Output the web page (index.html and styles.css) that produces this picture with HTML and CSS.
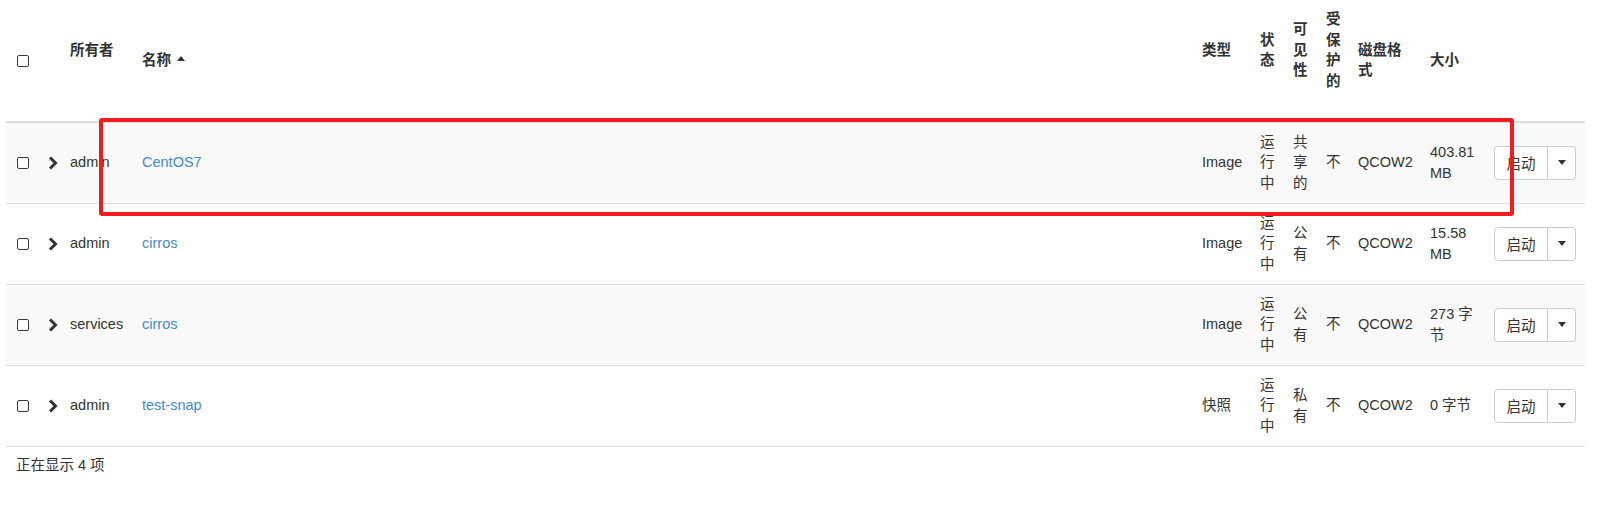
FILE: index.html
```html
<!DOCTYPE html>
<html lang="zh-CN">
<head>
<meta charset="utf-8">
<title>镜像</title>
<link rel="stylesheet" href="styles.css">
</head>
<body>
<div class="page">
  <table class="images">
    <colgroup>
      <col class="c-check"><col class="c-expand"><col class="c-owner"><col class="c-name">
      <col class="c-type"><col class="c-status"><col class="c-vis"><col class="c-prot">
      <col class="c-disk"><col class="c-size"><col class="c-act">
    </colgroup>
    <thead>
      <tr>
        <th><input type="checkbox" class="cb"></th>
        <th></th>
        <th class="th-up">所有者</th>
        <th>名称 <span class="caret-up"></span></th>
        <th class="th-up">类型</th>
        <th class="th-up">状态</th>
        <th class="th-up">可见性</th>
        <th class="th-up">受保护的</th>
        <th>磁盘格式</th>
        <th>大小</th>
        <th></th>
      </tr>
    </thead>
    <tbody>
      <tr class="odd">
        <td><input type="checkbox" class="cb"></td>
        <td><svg class="chev" viewBox="0 0 10 14" width="10" height="14"><path d="M2 1.5 L7.5 7 L2 12.5" fill="none" stroke="#333" stroke-width="3"/></svg></td>
        <td>admin</td>
        <td><a href="#" class="lnk">CentOS7</a></td>
        <td>Image</td>
        <td>运行中</td>
        <td>共享的</td>
        <td>不</td>
        <td>QCOW2</td>
        <td>403.81 MB</td>
        <td><div class="btn-group"><button class="btn btn-main">启动</button><button class="btn btn-caret"><span class="caret"></span></button></div></td>
      </tr>
      <tr>
        <td><input type="checkbox" class="cb"></td>
        <td><svg class="chev" viewBox="0 0 10 14" width="10" height="14"><path d="M2 1.5 L7.5 7 L2 12.5" fill="none" stroke="#333" stroke-width="3"/></svg></td>
        <td>admin</td>
        <td><a href="#" class="lnk">cirros</a></td>
        <td>Image</td>
        <td>运行中</td>
        <td>公有</td>
        <td>不</td>
        <td>QCOW2</td>
        <td>15.58 MB</td>
        <td><div class="btn-group"><button class="btn btn-main">启动</button><button class="btn btn-caret"><span class="caret"></span></button></div></td>
      </tr>
      <tr class="odd">
        <td><input type="checkbox" class="cb"></td>
        <td><svg class="chev" viewBox="0 0 10 14" width="10" height="14"><path d="M2 1.5 L7.5 7 L2 12.5" fill="none" stroke="#333" stroke-width="3"/></svg></td>
        <td>services</td>
        <td><a href="#" class="lnk">cirros</a></td>
        <td>Image</td>
        <td>运行中</td>
        <td>公有</td>
        <td>不</td>
        <td>QCOW2</td>
        <td>273 字节</td>
        <td><div class="btn-group"><button class="btn btn-main">启动</button><button class="btn btn-caret"><span class="caret"></span></button></div></td>
      </tr>
      <tr>
        <td><input type="checkbox" class="cb"></td>
        <td><svg class="chev" viewBox="0 0 10 14" width="10" height="14"><path d="M2 1.5 L7.5 7 L2 12.5" fill="none" stroke="#333" stroke-width="3"/></svg></td>
        <td>admin</td>
        <td><a href="#" class="lnk">test-snap</a></td>
        <td>快照</td>
        <td>运行中</td>
        <td>私有</td>
        <td>不</td>
        <td>QCOW2</td>
        <td>0 字节</td>
        <td><div class="btn-group"><button class="btn btn-main">启动</button><button class="btn btn-caret"><span class="caret"></span></button></div></td>
      </tr>
    </tbody>
    <tfoot>
      <tr><td colspan="11" class="foot">正在显示 4 项</td></tr>
    </tfoot>
  </table>
  <div class="highlight"></div>
</div>
</body>
</html>
```

FILE: styles.css
```css
html, body {
  margin: 0;
  padding: 0;
  background: #fff;
}
body {
  font-family: "Liberation Sans", "Noto Sans CJK SC", sans-serif;
  font-size: 14.5px;
  line-height: 20.5px;
  color: #333;
}
.page {
  position: relative;
  padding-left: 6px;
}
.images {
  width: 1579px;
  table-layout: fixed;
  border-collapse: collapse;
  border-spacing: 0;
}
.c-check { width: 34px; }
.c-expand { width: 22px; }
.c-owner { width: 72px; }
.c-name { width: 1060px; }
.c-type { width: 58px; }
.c-status { width: 33px; }
.c-vis { width: 33px; }
.c-prot { width: 32px; }
.c-disk { width: 72px; }
.c-size { width: 64px; }
.c-act { width: 99px; }

.images th {
  text-align: left;
  font-weight: bold;
  vertical-align: middle;
  padding: 9px 8px;
  border-bottom: 2px solid #ddd;
  word-break: break-word;
}
.images th.th-up {
  padding-bottom: 29.5px;
}
.images td {
  padding: 9.25px 8px;
  vertical-align: middle;
  border-top: 1px solid #ddd;
}
.images tbody tr.odd td {
  background: #f9f9f9;
}
.images td.foot {
  padding: 8px 8px 8px 10px;
  border-top: 1px solid #ddd;
}
.cb {
  -webkit-appearance: none;
  appearance: none;
  box-sizing: border-box;
  margin: 0 0 0 3px;
  width: 12px;
  height: 12px;
  border: 1px solid #3a3a3a;
  border-radius: 2px;
  background: #fff;
  vertical-align: middle;
}
.chev {
  display: block;
}
.caret-up {
  display: inline-block;
  width: 0;
  height: 0;
  border-left: 4.5px solid transparent;
  border-right: 4.5px solid transparent;
  border-bottom: 5px solid #333;
  vertical-align: 4px;
  margin-left: 2px;
}
.lnk {
  color: #428bca;
  text-decoration: none;
}
.btn-group {
  display: inline-flex;
}
.btn {
  font-family: inherit;
  font-size: 14.5px;
  color: #333;
  background: #fff;
  border: 1px solid #ccc;
  height: 34px;
  padding: 0;
  margin: 0;
  display: flex;
  align-items: center;
  justify-content: center;
}
.btn-main {
  width: 54px;
  border-radius: 4px 0 0 4px;
}
.btn-caret {
  width: 28px;
  border-left: 0;
  border-radius: 0 4px 4px 0;
}
.caret {
  display: inline-block;
  width: 0;
  height: 0;
  border-left: 4.5px solid transparent;
  border-right: 4.5px solid transparent;
  border-top: 5px solid #333;
}
.highlight {
  position: absolute;
  left: 99px;
  top: 118px;
  width: 1407px;
  height: 90px;
  border: 4px solid #f31c1c;
  border-radius: 3px;
  pointer-events: none;
}
```
